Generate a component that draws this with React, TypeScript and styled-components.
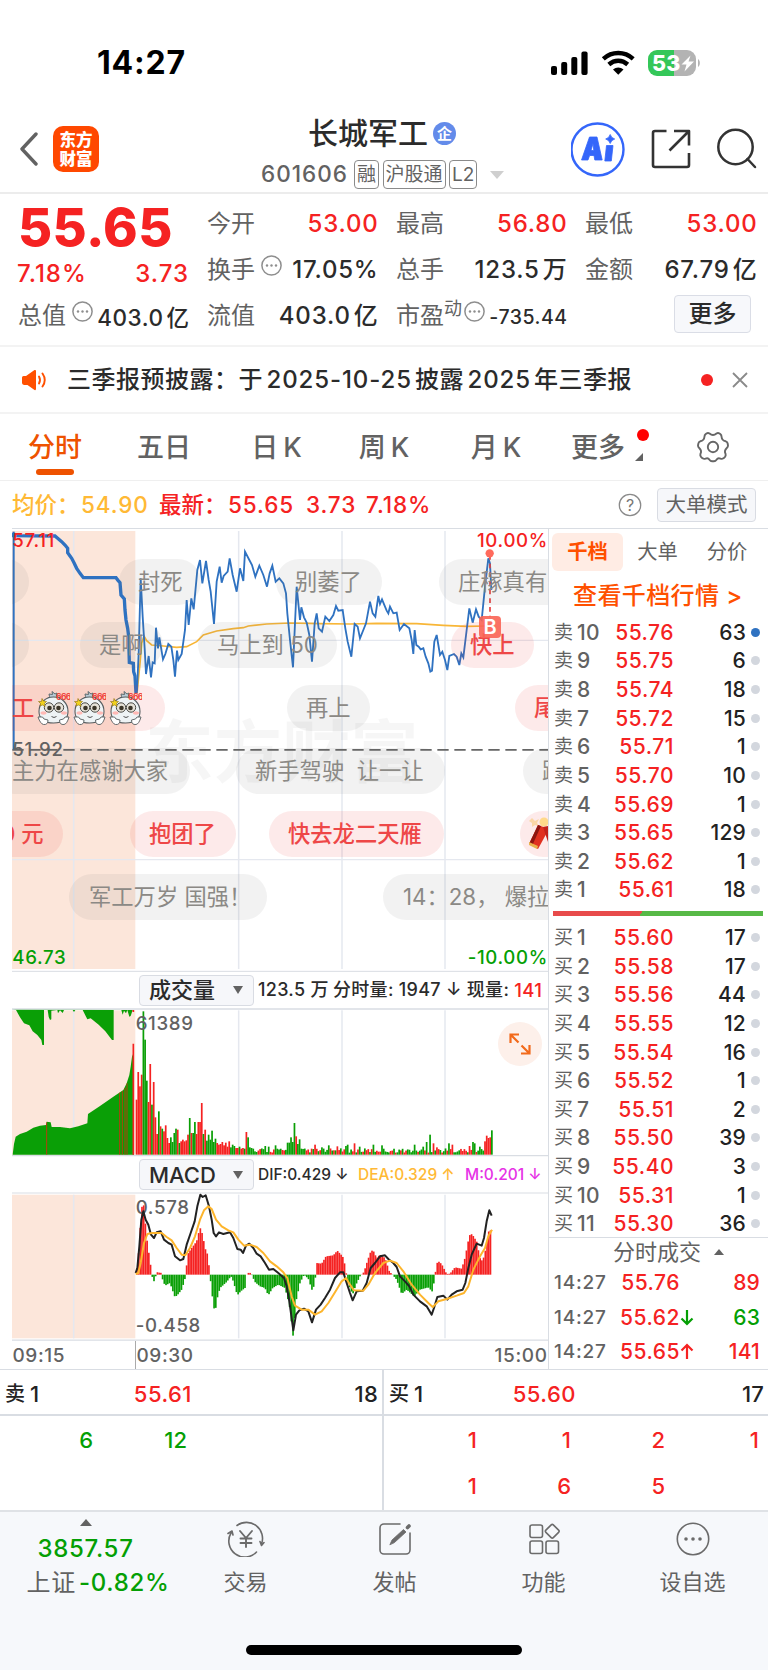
import React from "react";
import styled, { createGlobalStyle } from "styled-components";

const RED = "#f52222";
const GREEN = "#049f04";
const ORANGE = "#ff5000";
const AMBER = "#ffb935";
const INK = "#2b2b2b";
const GREY = "#626262";
const LINE = "#d9dde3";

const Global = createGlobalStyle`
  * { box-sizing: border-box; }
  body { margin: 0; background: #fff; }
  #root { width: 768px; }
`;

const Screen = styled.div`
  width: 768px;
  height: 1670px;
  display: flex;
  flex-direction: column;
  overflow: hidden;
  background: #fff;
  color: ${INK};
  font-family: Inter, "Noto Sans CJK SC", sans-serif;
  font-weight: 500;
  line-height: 1;
  white-space: pre;
`;

/* ---------- status bar ---------- */
const StatusBar = styled.header`
  height: 106px;
  padding: 19px 68px 0 97px;
  display: flex;
  align-items: center;
  justify-content: space-between;
`;
const Clock = styled.span`
  font-size: 32px;
  font-weight: 750;
  color: #000;
  letter-spacing: 0.8px;
`;

/* ---------- title bar ---------- */
const TitleBar = styled.div`
  height: 88px;
  flex: none;
  border-bottom: 2px solid #ececec;
  display: grid;
  grid-template-columns: 262px 1fr 197px;
`;
const TitleLeft = styled.div`
  display: flex;
  align-items: center;
  gap: 15px;
  padding: 0 0 0 19px;
`;
const Logo = styled.div`
  width: 46px;
  height: 46px;
  border-radius: 10px;
  background: #ff4800;
  color: #fff;
  font-family: "Noto Sans CJK SC", sans-serif;
  font-weight: 900;
  font-size: 16.5px;
  line-height: 18.5px;
  text-align: center;
  padding-top: 4px;
`;
const TitleMid = styled.div`
  display: flex;
  flex-direction: column;
`;
const NameRow = styled.div`
  display: flex;
  align-items: center;
  height: 30px;
  margin: 12px 0 0 46px;
  font-size: 30px;
  gap: 5px;
`;
const Verified = styled.span`
  width: 23px;
  height: 23px;
  border-radius: 50%;
  background: #638bea;
  color: #fff;
  font-size: 15px;
  font-weight: 700;
  display: grid;
  place-items: center;
`;
const CodeRow = styled.div`
  display: flex;
  align-items: center;
  height: 29px;
  margin-top: 12px;
  font-size: 22.5px;
  color: ${GREY};
`;
const Code = styled.span`
  width: 93px;
  margin-left: -1px;
  letter-spacing: 1px;
`;
const Tag = styled.span`
  height: 29px;
  margin-right: 3.5px;
  padding: 0 2px;
  border: 1.5px solid #8a8a8a;
  border-radius: 4px;
  font-size: 19px;
  font-weight: 400;
  display: flex;
  align-items: center;
`;
const TitleRight = styled.div`
  display: flex;
  align-items: center;
`;

/* ---------- quote ---------- */
const Quote = styled.section`
  height: 153px;
  flex: none;
  padding: 7px 12px 0 18px;
  border-bottom: 2px solid #f3f3f3;
  display: grid;
  grid-template-columns: 170px 170px 170px 171px;
  grid-template-rows: repeat(3, 46px);
  column-gap: 19px;
`;
const Headline = styled.div`
  grid-row: span 2;
  display: flex;
  flex-direction: column;
`;
const BigPrice = styled.div`
  font-size: 52.5px;
  font-weight: 800;
  color: ${RED};
  height: 53px;
  line-height: 53px;
  letter-spacing: 0.3px;
`;
const Change = styled.div`
  display: flex;
  justify-content: space-between;
  align-items: center;
  height: 52px;
  margin: 0 -1px;
  font-size: 24px;
  letter-spacing: 1px;
  color: ${RED};
`;
const Stat = styled.div`
  display: flex;
  align-items: center;
  justify-content: space-between;
`;
const StatLabel = styled.span`
  font-size: 24px;
  font-weight: 400;
  color: ${GREY};
  display: flex;
  align-items: center;
`;
const StatSup = styled.sup`
  font-size: 18px;
  line-height: 18px;
  margin: -14px 0 0 0;
`;
const StatValue = styled.span<{ $up?: boolean; $size?: number }>`
  font-size: ${(p) => p.$size ?? 24}px;
  color: ${(p) => (p.$up ? RED : INK)};
  padding-top: ${(p) => (p.$size ? 4 : 0)}px;
  letter-spacing: ${(p) => (p.$size ? 0.5 : 0.8)}px;
  margin-right: -1.5px;
`;
const Unit = styled.span`
  margin-left: 3px;
`;
const MoreButton = styled.button`
  all: unset;
  box-sizing: border-box;
  justify-self: end;
  align-self: start;
  width: 77px;
  height: 38px;
  margin: 2px 5px 0 0;
  border: 1.5px solid #dadde6;
  border-radius: 4px;
  background: #f7f8fb;
  font-size: 24px;
  display: grid;
  place-items: center;
`;

/* ---------- notice ---------- */
const Notice = styled.section`
  height: 67px;
  flex: none;
  border-bottom: 2px solid #f3f3f3;
  padding: 0 20px 0 21px;
  display: flex;
  align-items: center;
`;
const NoticeText = styled.p`
  margin: 0 0 0 19px;
  flex: 1;
  font-size: 24px;
  letter-spacing: 0.5px;
`;
const Latin = styled.span`
  margin: 0 3px 0 3.5px;
  letter-spacing: 0.9px;
`;
const Dot = styled.i<{ $size: number; $color: string }>`
  display: block;
  width: ${(p) => p.$size}px;
  height: ${(p) => p.$size}px;
  border-radius: 50%;
  background: ${(p) => p.$color};
`;

/* ---------- period tabs ---------- */
const Tabs = styled.nav`
  height: 67px;
  flex: none;
  border-bottom: 1.5px solid #efefef;
  display: grid;
  grid-template-columns: 110px 108px 117px 98px 126px 78px 151px;
`;
const Tab = styled.div<{ $active?: boolean }>`
  position: relative;
  display: flex;
  align-items: center;
  justify-content: center;
  font-size: 27px;
  color: ${(p) => (p.$active ? "#ee5200" : GREY)};
  &::after {
    content: "";
    display: ${(p) => (p.$active ? "block" : "none")};
    position: absolute;
    bottom: 5px;
    width: 38px;
    height: 6px;
    border-radius: 3px;
    background: #ee5200;
  }
`;
const TabK = styled.span`
  margin-left: 5px;
`;
const TabBadge = styled.span`
  position: absolute;
  right: -12px;
  top: 15px;
`;
const TabCorner = styled.i`
  position: absolute;
  right: -6px;
  top: 39px;
  border-left: 8px solid transparent;
  border-bottom: 8px solid ${GREY};
`;

/* ---------- price line ---------- */
const InfoLine = styled.div`
  height: 48px;
  flex: none;
  margin: 0 12px -1px;
  display: flex;
  align-items: center;
  font-size: 22.5px;
  color: ${RED};
`;
const InfoItem = styled.span<{ $w: number; $color?: string }>`
  width: ${(p) => p.$w}px;
  color: ${(p) => p.$color ?? RED};
  letter-spacing: ${(p) => (p.$w === 69 ? 0 : 0.9)}px;
`;
const ModeButton = styled.button`
  all: unset;
  box-sizing: border-box;
  width: 99px;
  height: 34px;
  margin-left: 15px;
  border: 1.5px solid #d9dce3;
  border-radius: 4px;
  background: #f6f7fa;
  color: ${GREY};
  font-size: 20.5px;
  font-weight: 400;
  display: grid;
  place-items: center;
`;

/* ---------- main area ---------- */
const Main = styled.main`
  height: 841px;
  flex: none;
  margin-left: 12px;
  display: grid;
  grid-template-columns: 537px 219px;
`;
const Charts = styled.div`
  border-right: 1px solid ${LINE};
  display: flex;
  flex-direction: column;
`;
const PriceArea = styled.div`
  position: relative;
  height: 444px;
  overflow: hidden;
  svg { display: block; }
`;
const Pill = styled.span<{ $x: number; $row: number; $w: number; $red?: boolean; $inset?: number }>`
  position: absolute;
  left: ${(p) => p.$x}px;
  top: ${(p) => 31.3 + p.$row * 63}px;
  width: ${(p) => p.$w}px;
  height: 45.5px;
  padding-left: ${(p) => p.$inset ?? 19}px;
  border-radius: 23px;
  background: ${(p) => (p.$red ? "rgba(235,50,50,.1)" : "rgba(110,110,110,.085)")};
  color: ${(p) => (p.$red ? "#ee4747" : "#8b8985")};
  font-size: 22.3px;
  font-weight: ${(p) => (p.$red ? 500 : 400)};
  display: flex;
  align-items: center;
  svg { flex: none; margin-left: 3px; }
`;
const PaneHead = styled.div<{ $h: number }>`
  height: ${(p) => p.$h}px;
  display: flex;
  align-items: center;
  padding-left: 127px;
`;
const Picker = styled.div`
  width: 115px;
  height: 31px;
  margin-right: 4px;
  flex: none;
  border: 1.5px solid #d9dce3;
  border-radius: 4px;
  background: #f6f7fa;
  padding: 0 10px 0 9px;
  display: flex;
  align-items: center;
  justify-content: space-between;
  font-size: 22px;
`;
const Caret = styled.i<{ $up?: boolean; $w: number; $h: number; $color?: string; $gap?: number }>`
  margin-left: ${(p) => p.$gap ?? 0}px;
  border: ${(p) => p.$w / 2}px solid transparent;
  border-top: ${(p) => (p.$up ? "0" : `${p.$h}px solid ${p.$color ?? GREY}`)};
  border-bottom: ${(p) => (p.$up ? `${p.$h}px solid ${p.$color ?? GREY}` : "0")};
`;
const Reading = styled.span<{ $w?: number; $color?: string; $size: number }>`
  font-size: ${(p) => p.$size}px;
  color: ${(p) => p.$color ?? INK};
  width: ${(p) => (p.$w ? `${p.$w}px` : "auto")};
  letter-spacing: ${(p) => (p.$size > 17 ? 0.3 : 0)}px;
  font-weight: ${(p) => (p.$size > 17 ? 500 : 550)};
`;
const PaneBox = styled.div`
  position: relative;
  svg { display: block; }
`;
const ExpandButton = styled.div`
  position: absolute;
  right: 6px;
  top: 14px;
  width: 44px;
  height: 44px;
  border-radius: 50%;
  background: #fdf0ea;
  display: grid;
  place-items: center;
`;
const TimeAxis = styled.div`
  height: 29px;
  flex: none;
  display: grid;
  grid-template-columns: 123px 1fr auto;
  align-items: stretch;
  color: ${GREY};
  font-size: 19px;
  letter-spacing: 0.6px;
`;
const TimeMark = styled.span<{ $rule?: boolean }>`
  display: flex;
  align-items: center;
  padding: 0 0.5px;
  border-left: ${(p) => (p.$rule ? "1px solid #aaa" : "0")};
`;

/* ---------- order book ---------- */
const Book = styled.aside`
  border-top: 1px solid ${LINE};
  display: flex;
  flex-direction: column;
`;
const BookTabs = styled.div`
  height: 47px;
  flex: none;
  padding: 4px 6px 5px 3px;
  display: grid;
  grid-template-columns: 71px 69px 1fr;
`;
const BookTab = styled.div<{ $active?: boolean }>`
  display: grid;
  place-items: center;
  border-radius: 6px;
  font-size: 20.3px;
  font-weight: ${(p) => (p.$active ? 700 : 400)};
  color: ${(p) => (p.$active ? ORANGE : GREY)};
  background: ${(p) => (p.$active ? "#ffece4" : "transparent")};
`;
const BookLink = styled.div`
  height: 42px;
  flex: none;
  padding: 0 0 2px 24px;
  display: flex;
  align-items: center;
  font-size: 24px;
  letter-spacing: 0.4px;
  color: ${ORANGE};
`;
const Level = styled.div`
  height: 28.64px;
  flex: none;
  display: grid;
  grid-template-columns: 23px 30px 67px 72px 1fr;
  align-items: center;
  padding-left: 5px;
  font-size: 21px;
  i { margin-left: 5px; }
`;
const LevelSide = styled.span`
  font-size: 19px;
  font-weight: 400;
  color: ${GREY};
`;
const LevelNo = styled.span`
  color: ${GREY};
  letter-spacing: 0.4px;
`;
const Price = styled.span`
  color: ${RED};
  text-align: right;
  font-weight: 550;
  letter-spacing: 0.5px;
`;
const Volume = styled.span`
  text-align: right;
  color: #222;
  font-weight: 550;
  letter-spacing: 0.2px;
`;
const Ratio = styled.div`
  height: 5px;
  flex: none;
  margin: 7px 5px 7px 4px;
  background: linear-gradient(120deg, #e84b4b 42%, #57b947 42%);
`;
const TradesHead = styled.div`
  height: 29px;
  flex: none;
  margin-top: -1.5px;
  border-top: 1.5px solid ${LINE};
  background: #fff;
  display: flex;
  align-items: center;
  padding-left: 64px;
  gap: 13px;
  font-size: 22px;
  font-weight: 400;
  color: ${GREY};
`;
const Trade = styled.div<{ $down?: boolean }>`
  height: 34.3px;
  flex: none;
  display: grid;
  grid-template-columns: 66px 60px 19px 1fr;
  align-items: center;
  padding: 0 8px 0 5px;
  font-size: 21px;
  ${Volume} { color: ${(p) => (p.$down ? GREEN : RED)}; }
  svg { stroke: ${(p) => (p.$down ? GREEN : RED)}; }
`;
const TradeTime = styled.span`
  font-size: 19px;
  letter-spacing: 0.8px;
  color: ${GREY};
`;

/* ---------- best quotes ---------- */
const Queue = styled.section`
  height: 143px;
  flex: none;
  border-top: 1.5px solid ${LINE};
  border-bottom: 2px solid #dfe2e6;
  display: grid;
  grid-template-columns: 384px 384px;
`;
const QueueSide = styled.div<{ $first?: boolean; $tone: string }>`
  border-right: ${(p) => (p.$first ? `2px solid ${LINE}` : "0")};
  color: ${(p) => p.$tone};
`;
const QueueHead = styled.div`
  height: 46px;
  padding: 3px 4px 0 5px;
  border-bottom: 2px solid ${LINE};
  display: grid;
  grid-template-columns: 56px 131px 1fr;
  align-items: center;
  font-size: 22px;
  color: #222;
`;
const QueueLabel = styled.span`
  display: flex;
  align-items: center;
  gap: 5px;
  font-size: 20px;
  span { font-size: 22px; }
`;
const QueueCells = styled.div`
  display: grid;
  grid-template-columns: repeat(4, 94px);
  grid-auto-rows: 46.5px;
  align-items: center;
  text-align: right;
  padding-top: 0.5px;
  margin-left: -1px;
  font-size: 22px;
  font-weight: 550;
`;

/* ---------- bottom nav ---------- */
const BottomNav = styled.footer`
  flex: 1;
  background: #f6f8fb;
  display: grid;
  grid-template-columns: 171px repeat(4, 149px);
  grid-template-rows: 133px 1fr;
`;
const NavItem = styled.div`
  display: flex;
  flex-direction: column;
  align-items: center;
  padding-top: 9px;
  gap: 14px;
  font-size: 22px;
  font-weight: 400;
  color: ${GREY};
`;
const IndexBox = styled.div`
  display: flex;
  flex-direction: column;
  align-items: center;
  padding-top: 7px;
  color: ${GREEN};
  font-size: 24px;
  letter-spacing: 0.7px;
  gap: 10.5px;
`;
const IndexRow = styled.div`
  display: flex;
  align-items: center;
  gap: 3px;
  padding-left: 25px;
`;
const IndexName = styled.span`
  color: ${GREY};
  font-weight: 400;
`;
const HomeBar = styled.div`
  grid-column: 1 / -1;
  justify-self: center;
  width: 276px;
  height: 10px;
  border-radius: 5px;
  background: #000;
`;

/* ---------- icons ---------- */
const stroke = { fill: "none", strokeLinecap: "round", strokeLinejoin: "round" } as const;

const InfoGlyph = styled.svg<{ $tight?: boolean }>`
  margin: -10px 0 0 ${(p) => (p.$tight ? 2 : 6)}px;
`;
const Ellipsis = ({ tight }: { tight?: boolean }) => (
  <InfoGlyph $tight={tight} width="21" height="21" viewBox="0 0 21 21">
    <circle cx="10.5" cy="10.5" r="9.6" fill="none" stroke="#8e8e8e" strokeWidth="1.5" />
    <g fill="#8e8e8e"><circle cx="6" cy="10.5" r="1.2" /><circle cx="10.5" cy="10.5" r="1.2" /><circle cx="15" cy="10.5" r="1.2" /></g>
  </InfoGlyph>
);

const StatusIcons = () => (
  <svg width="152" height="28" viewBox="0 0 152 28">
    <rect x="3" y="17" width="6" height="9" rx="2" />
    <rect x="13.2" y="13" width="6" height="13" rx="2" />
    <rect x="23.3" y="8" width="6" height="18" rx="2" />
    <rect x="33.4" y="2.5" width="6.2" height="23.5" rx="2" />
    <g fill="none" stroke="#000" strokeWidth="4.4">
      <path d="M55.3 9.8C64 2 76.5 2 85.2 9.8" />
      <path d="M60.8 15.5C66.5 10.5 74 10.5 79.7 15.5" />
    </g>
    <path d="M65 20.5C68 17.7 72.5 17.7 75.5 20.5L70.25 25.8Z" />
    <path d="M126 1V27H109A9 9 0 0 1 100 18V10A9 9 0 0 1 109 1Z" fill="#34c759" />
    <path d="M126 1H139A9 9 0 0 1 148 10V18A9 9 0 0 1 139 27H126Z" fill="#b3b3b3" />
    <path d="M150 10C152.5 11.5 152.5 16.500 150 18Z" fill="#b3b3b3" />
    <text x="104" y="21.600" fontSize="21.500" fontWeight="800" fill="#fff" letterSpacing="0.300">53</text>
    <path d="M142.500 6.500L133.500 15.500H138.500L136.500 22.500L146 12.500H140.500Z" fill="#fff" />
  </svg>
);

const BackIcon = () => (
  <svg width="19" height="34" viewBox="0 0 19 34" {...stroke} stroke="#626262" strokeWidth="3.4">
    <path d="M17 2L3 17L17 32" />
  </svg>
);

const AiIcon = () => (
  <svg width="55" height="55" viewBox="0 0 55 55">
    <circle cx="26.500" cy="27.500" r="26" fill="none" stroke="#3466fa" strokeWidth="2.400" />
    <path d="M18.500 15H26L31.200 38H23.800L23 33.500H18.600L17 38H10.500ZM22 21.500L20 28.500H22.800Z" fill="#3466fa" fillRule="evenodd" stroke="#3466fa" strokeWidth="0.800" strokeLinejoin="round" />
    <path d="M35.500 23.500H42L40.300 39H33.800Z" fill="#3466fa" stroke="#3466fa" strokeWidth="0.800" strokeLinejoin="round" />
    <path d="M39.200 12.500Q40.200 16 43.700 17Q40.200 18 39.200 21.500Q38.200 18 34.700 17Q38.200 16 39.200 12.500Z" fill="#3466fa" stroke="#3466fa" strokeWidth="0.800" />
  </svg>
);

const HeaderGlyph = styled.svg`
  margin-left: 25px;
`;
const ShareIcon = () => (
  <HeaderGlyph width="40" height="40" viewBox="0 0 40 40" {...stroke} stroke="#333" strokeWidth="2.600" strokeLinecap="butt">
    <path d="M15.500 2H4A2 2 0 0 0 2 4V36A2 2 0 0 0 4 38H36A2 2 0 0 0 38 36V24" />
    <path d="M23 2H38V16.500M38 2L18.500 21.500" />
  </HeaderGlyph>
);
const SearchIcon = () => (
  <HeaderGlyph width="42" height="42" viewBox="0 0 42 42" {...stroke} stroke="#333" strokeWidth="2.500">
    <circle cx="19.500" cy="19" r="17.200" />
    <path d="M31.500 31L39 39" />
  </HeaderGlyph>
);

const SpeakerIcon = () => (
  <svg width="27" height="22" viewBox="0 0 27 22">
    <path d="M1 8.500Q1 7 2.500 7H5L13.500 1Q15 .5 15 2V20Q15 21.500 13.500 21L6.500 16H3Q1 15.500 1 14Z" fill="#ff5000" />
    <g {...stroke} stroke="#ff5000" strokeWidth="1.900"><path d="M18 7.500Q20 11 18 14.500" /><path d="M21.500 4.500Q26 11 21.500 17.500" /></g>
  </svg>
);
const CloseGlyph = styled.svg`
  margin-left: 19px;
`;

const GearIcon = () => (
  <svg width="32" height="32" viewBox="0 0 32 32" {...stroke} stroke="#666" strokeWidth="1.900">
    <circle cx="16" cy="16" r="5.200" />
    <path d="M9.500 2.500Q11 1.500 12.500 2.500Q16 5.500 19.500 2.500Q21 1.500 22.500 2.500L23.500 3.200Q24.500 4 24.500 5.500Q24.800 9.500 28.800 10.300Q30.300 10.800 30.600 12.300L31 14.500Q31 16 29.800 17Q26.800 19.800 28.600 23Q29 24.500 28 25.800L26.500 27.300Q25 28.200 23.500 27.600Q21 26.300 19.500 28.800Q18.500 30.300 17 30.300H15Q13.500 30.300 12.500 28.800Q11 26.300 8.500 27.600Q7 28.200 5.500 27.300L4 25.800Q3 24.500 3.400 23Q5.200 19.800 2.200 17Q1 16 1 14.500L1.400 12.300Q1.700 10.800 3.200 10.300Q7.200 9.500 7.500 5.500Q7.500 4 8.500 3.200Z" />
  </svg>
);

const HelpGlyph = styled.svg`
  margin-left: auto;
`;
const HelpIcon = () => (
  <HelpGlyph width="24" height="24" viewBox="0 0 24 24">
    <circle cx="12" cy="12" r="10.700" fill="none" stroke="#8a8a8a" strokeWidth="1.300" />
    <text x="12" y="17.500" textAnchor="middle" fontSize="16" fontWeight="400" fill="#777">?</text>
  </HelpGlyph>
);

const ArrowIcon = ({ up }: { up?: boolean }) => (
  <svg width="14" height="17" viewBox="0 0 14 17" fill="none" strokeWidth="2.200">
    <path d={up ? "M7 16V2M1.500 7.500L7 2L12.500 7.500" : "M7 1V15M1.500 9.500L7 15L12.500 9.500"} />
  </svg>
);

const FaceEmoji = () => (
  <svg width="33" height="36" viewBox="0 0 33 36">
    <path d="M10 9Q14 6.500 12 4L15.500 4.500L15 1.500L18 4L20 3L19.500 6L23 8Z" fill="#b9ccd6" stroke="#5f6b70" strokeWidth="1" strokeLinejoin="round" />
    <path d="M16.500 7C25 7 31 13.500 31 21.500C31 29.500 25 33 16.500 33S2 29.500 2 21.500C2 13.500 8 7 16.500 7Z" fill="#eef3f5" stroke="#565d60" strokeWidth="1.100" />
    <circle cx="12" cy="17.500" r="4.700" fill="#e6e2d8" stroke="#4a4a45" strokeWidth="1" />
    <circle cx="22" cy="17.500" r="4.700" fill="#e6e2d8" stroke="#4a4a45" strokeWidth="1" />
    <circle cx="12.500" cy="18" r="2.300" fill="#3b3528" /><circle cx="21.500" cy="18" r="2.300" fill="#3b3528" />
    <ellipse cx="6.500" cy="23" rx="3" ry="1.700" fill="#ffb9b5" /><ellipse cx="27" cy="23" rx="3" ry="1.700" fill="#ffb9b5" />
    <path d="M14.500 26.500Q17 28.500 19.500 26.500" fill="none" stroke="#555" strokeWidth="1" />
    <path d="M1 27L5.500 27L7 29L11 30Q11 35 6.500 34.500Q3.500 34 1 27ZM32 27L28 27L26.500 29L22.500 30Q22.500 35 27 34.500Q30 34 32 27Z" fill="#fff" stroke="#565d60" strokeWidth="0.900" />
    <path d="M5 8.500L6.500 11L9.500 11.500L7.500 13.500L8 16.500L5.500 15L3 16L3.500 13.500L1.500 11.500L4.500 11.500Z" fill="#f2d21e" stroke="#8a6d10" strokeWidth="0.600" />
    <text x="19" y="9.500" fontSize="8.500" fontWeight="700" fill="#f0443c" letterSpacing="-0.600">666</text>
  </svg>
);

const Firecracker = () => (
  <svg width="34" height="34" viewBox="0 0 34 34">
    <path d="M3 1L6 4L10 2L8 6L10 9L6 8L3 10V6L0 4Z" fill="#f8cf8a" opacity=".7" /><circle cx="15" cy="5" r="4.500" fill="#ffd98a" />
    <path d="M9 8L20 12L9 32L0 27Z" fill="#e0301f" /><path d="M9 8L12 9L3 29L0 27Z" fill="#8d150f" />
    <path d="M0 25L9 29L8 32L0 28Z" fill="#e9b24b" /><path d="M14 10L25 8L31 33L22 34Z" fill="#c3211a" />
  </svg>
);

const TradeIcon = () => (
  <svg width="38" height="36" viewBox="0 0 38 36" {...stroke} stroke="#6b6b6b" strokeWidth="1.600">
    <path d="M10 4.500A16 16 0 0 1 34.500 23M34.500 24.500L37 21.500M34.500 24.500L33 20.500M29.500 31A16 16 0 0 1 4 12M1 12.500L5 10L6 14" />
    <path d="M13 10L19 17L25 10M19 17V26M13.500 17.500H24.500M13.500 22H24.500" strokeWidth="1.900" />
  </svg>
);
const PostIcon = () => (
  <svg width="34" height="36" viewBox="0 0 34 36" {...stroke} stroke="#6b6b6b" strokeWidth="1.600">
    <path d="M22 3H6A4 4 0 0 0 2 7V29A4 4 0 0 0 6 33H28A4 4 0 0 0 32 29V12" />
    <path d="M12 23.500L14 19L25.500 8.500L28 11L16.500 21.500Z" fill="#6b6b6b" strokeWidth="0.800" /><path d="M29.500 6.500L31 5" strokeWidth="3.600" />
  </svg>
);
const GridIcon = () => (
  <svg width="34" height="36" viewBox="0 0 34 36" {...stroke} stroke="#6b6b6b" strokeWidth="1.600">
    <rect x="3" y="4" width="12.500" height="12.500" rx="2" /><rect x="3" y="20" width="12.500" height="12.500" rx="2" />
    <rect x="19" y="20" width="12.500" height="12.500" rx="2" /><rect x="20" y="5" width="10.500" height="10.500" rx="1.500" transform="rotate(45 25.250 10.250)" />
  </svg>
);
const MoreIcon = () => (
  <svg width="34" height="36" viewBox="0 0 34 36">
    <circle cx="17" cy="18" r="15.700" fill="none" stroke="#6b6b6b" strokeWidth="1.600" />
    <g fill="#6b6b6b"><circle cx="10" cy="18" r="1.800" /><circle cx="17" cy="18" r="1.800" /><circle cx="24" cy="18" r="1.800" /></g>
  </svg>
);

/* ---------- chart data (three units to the pixel) ---------- */
const AUCTION = "41,398 41,407 165,408 172,414 185,425 195,435 203,445 203,458 215,475 222,488 230,505 240,520 250,533 348,533 354,541 360,548 363,585 373,597 375,630 378,660 383,685 386,710 388,787 400,790 401,815 405,828 408,880";
const PRICE = "408,880 411,870 416,760 422,535 428,650 434,745 438,822 446,768 453,832 458,787 464,790 468,683 474,745 478,712 489,778 496,762 505,732 514,740 520,780 525,830 531,752 535,780 545,762 555,690 560,600 566,675 574,595 581,628 592,510 600,480 607,550 618,483 626,540 632,575 642,672 650,545 659,500 665,548 671,528 683,515 689,475 698,525 710,575 720,505 730,543 735,455 748,480 756,495 766,530 778,497 790,525 801,560 809,520 817,497 827,545 838,535 850,550 858,580 862,640 870,720 879,802 890,560 900,660 904,622 912,652 920,668 928,705 936,785 944,670 950,640 956,685 966,695 976,650 988,663 1000,645 1008,618 1015,632 1028,630 1036,685 1043,725 1054,770 1064,672 1073,680 1080,715 1090,690 1098,670 1110,605 1118,640 1126,650 1135,588 1140,612 1146,598 1160,632 1165,640 1170,620 1180,640 1190,638 1199,690 1212,672 1228,685 1235,720 1240,762 1244,690 1249,735 1256,740 1262,748 1270,745 1277,770 1285,790 1291,815 1296,812 1303,725 1310,705 1320,765 1327,755 1335,780 1342,810 1348,768 1362,762 1370,770 1378,795 1384,760 1390,772 1400,690 1408,625 1418,668 1428,628 1436,650 1445,660 1455,560 1465,475 1470,490 1474,570";
const AVERAGE = "411,880 420,790 425,730 432,708 440,722 455,735 490,738 530,742 560,740 590,725 610,705 650,693 700,686 730,683 745,678 800,672 870,669 960,671 1050,672 1130,670 1250,671 1330,676 1400,679 1460,678";
const DIF = "407,850 412,835 418,770 424,690 430,665 437,690 445,705 453,735 462,745 470,728 482,725 492,750 505,760 515,765 525,800 540,812 550,808 560,765 572,730 584,695 592,650 601,615 608,622 617,617 627,650 635,690 641,730 648,740 657,728 670,733 690,728 700,745 712,778 722,780 729,790 738,768 748,762 760,775 770,792 782,800 795,820 807,840 820,838 835,850 852,865 860,890 868,935 880,1022 888,975 898,962 912,957 925,965 936,998 948,960 962,945 975,925 990,900 1005,865 1020,848 1030,848 1040,880 1050,910 1058,932 1070,905 1088,903 1100,880 1112,835 1125,820 1140,800 1155,797 1165,808 1180,820 1190,832 1200,860 1215,875 1228,890 1240,915 1260,935 1280,950 1295,975 1302,955 1312,922 1330,918 1342,930 1355,915 1370,905 1388,900 1396,880 1405,835 1415,795 1430,762 1445,768 1452,745 1460,695 1468,662 1475,678";
const DEA = "407,853 415,850 422,820 432,760 442,733 455,730 485,730 500,742 515,752 530,775 545,795 556,797 570,775 585,740 600,690 612,662 625,650 635,658 648,690 665,710 685,722 700,728 715,750 732,768 750,765 770,772 790,790 810,815 830,830 850,848 862,865 875,920 885,948 905,960 925,960 945,975 965,965 985,940 1005,908 1025,875 1038,865 1050,885 1062,902 1090,903 1105,885 1125,850 1150,820 1170,813 1190,820 1210,845 1235,885 1260,915 1285,940 1298,952 1315,935 1340,928 1370,918 1392,910 1405,890 1420,840 1440,800 1455,775 1465,740 1476,720";

// Opening minutes: positive bars are red, negative ones green.
const OPEN_VOLUME = [
  165, 248, 205, 240, -430, -345, -222, 158, 272, -150, 218, 112, 62, -130, 85, -78, 70, 88, 50, 35, -52, -38, -65, -78, 75, -35,
  40, 45, 40, 43, 60, -110, 65, -65, -98, 62, 98, 98, 155, -62, 75, -42, -60, -45, -72, -38, -48, 35, 30, 32, 38, 28, 36, 24, 40,
  -22, -30, -26, 20, 20, -24, 18, 20, -18, 68, -52, -22, -20, -18, -10, -8,
];
const VOLUME_PEAKS: Record<number, number> = {
  75: -26, 77: -24, 81: -28, 88: -36, 89: -36, 90: -52, 91: -38, 92: -95, 93: 55, 94: -32, 95: -46, 96: -18, 104: 30, 108: -22, 112: -28, 117: 25,
  122: -26, 123: -30, 127: 34, 130: -24, 138: -30, 143: -28, 162: -30, 167: -24, 169: -38, 171: -60, 173: 34, 175: 22, 182: -34, 184: 30,
  194: 26, 196: -38, 197: -34, 200: -24, 203: 40, 204: 57, 205: 50, 206: 52, 207: -73, 208: -14,
};
const volumeBars = Array.from({ length: 208 }, (_, i) => {
  if (i < OPEN_VOLUME.length) return OPEN_VOLUME[i];
  if (VOLUME_PEAKS[i]) return VOLUME_PEAKS[i];
  const n = Math.abs(Math.sin(i * 12.9898) * 43758.5453) % 1;
  const h = 6 + n * 13;
  return Math.sin(i * 0.9) + Math.sin(i * 2.3) > 0.1 ? h : -h;
});

const HIST: [number, number][] = [
  [407, 5], [412, 25], [418, 90], [423, 180], [429, 228], [434, 180], [439, 120], [445, 75], [450, 45], [455, 0], [460, -18], [465, -22],
  [469, 10], [475, 5], [482, 8], [487, -12], [495, -33], [510, -25], [525, -68], [535, -58], [545, -45], [553, -20], [558, 0], [562, 60],
  [575, 80], [590, 100], [600, 142], [608, 120], [615, 80], [623, 60], [629, 10], [633, -30], [640, -90], [645, -115], [652, -70], [660, -40],
  [680, -22], [693, -5], [700, -20], [712, -62], [722, -50], [735, -40], [740, 0], [748, 8], [755, 0], [765, -22], [780, -35], [795, -40],
  [805, -62], [818, -40], [835, -30], [855, -40], [868, -90], [880, -190], [888, -80], [900, -25], [912, 0], [925, -12], [938, -52],
  [946, -10], [950, 35], [965, 33], [978, 55], [1000, 58], [1012, 72], [1028, 55], [1036, 25], [1042, -20], [1058, -60], [1068, -30],
  [1080, -5], [1092, 8], [1102, 40], [1113, 72], [1120, 72], [1130, 50], [1140, 60], [1155, 50], [1168, 10], [1180, -3], [1190, -15],
  [1205, -58], [1220, -45], [1243, -65], [1260, -45], [1285, -38], [1298, -52], [1305, 0], [1313, 42], [1325, 32], [1340, 2], [1350, 3],
  [1365, 22], [1385, 18], [1395, 50], [1408, 118], [1416, 122], [1430, 100], [1440, 50], [1448, 40], [1458, 80], [1465, 128], [1471, 135], [1480, 80],
];
const histAt = (x: number) => {
  const k = Math.max(1, HIST.findIndex(([hx]) => hx >= x));
  const [x0, h0] = HIST[k - 1];
  const [x1, h1] = HIST[k];
  return h0 + ((h1 - h0) * (x - x0)) / (x1 - x0);
};

const Grid = ({ top, bottom }: { top: number; bottom: number }) => (
  <g>
    <rect x="36" y={top} width="370" height={bottom - top} fill="#fce6da" />
    {[221, 716, 1026, 1335].map((x) => (
      <line key={x} x1={x} x2={x} y1={top} y2={bottom} stroke="#e5e8ef" strokeWidth="4.5" />
    ))}
  </g>
);
const Label = styled.text<{ $fill?: string }>`
  font-size: 56px;
  letter-spacing: 2px;
  fill: ${(p) => p.$fill ?? GREY};
`;

const PriceChart = () => (
  <svg width="536" height="444" viewBox="36 384 1608 1332">
    <Grid top={393} bottom={1707} />
    <path d="M36 385.500H1644M36 1714H1644" stroke="#d9dde3" strokeWidth="3" />
    <path d="M36 721H1644M36 1379H1644" stroke="#e5e8ef" strokeWidth="4" />
    <text x="436" y="1130" fontSize="205" fontWeight="700" fill="#000" fillOpacity=".035" fontFamily="Noto Sans CJK SC">东方财富</text>
    <path d="M36 1049.500H1644" stroke="#666" strokeWidth="5" strokeDasharray="34 17" strokeDashoffset="-1" />
    <polyline points={AVERAGE} fill="none" stroke="#f8b637" strokeWidth="5" />
    <path d="M41 395V1048" stroke="#2f72c1" strokeWidth="6" />
    <polyline points={AUCTION} fill="none" stroke="#2f72c1" strokeWidth="10" />
    <polyline points={PRICE} fill="none" stroke="#2f72c1" strokeWidth="5.500" />
    <path d="M1470 465V650" stroke="#e84040" strokeWidth="5" strokeDasharray="14 12" />
    <circle cx="1469" cy="460" r="12.500" fill="#ff6a5c" />
    <Label x="37" y="441" $fill={RED}>57.11</Label>
    <Label x="37" y="1069">51.92</Label>
    <Label x="37" y="1693" $fill={GREEN}>46.73</Label>
    <Label x="1644" y="441" textAnchor="end" $fill={RED}>10.00%</Label>
    <Label x="1644" y="1693" textAnchor="end" $fill={GREEN}>-10.00%</Label>
  </svg>
);

const BuyMark = styled.span`
  position: absolute;
  left: 467px;
  top: 88px;
  width: 22px;
  height: 22px;
  border-radius: 4px;
  background: rgba(250, 100, 85, 0.9);
  color: #fff;
  font-size: 20px;
  font-weight: 600;
  display: grid;
  place-items: center;
`;

const VolumeChart = () => (
  <svg width="536" height="149" viewBox="36 54 1608 447">
    <Grid top={61} bottom={494} />
    <path d="M36 57H1644M36 497H1644" stroke="#d9dde3" strokeWidth="4" />
    <polygon fill="#0a9f06" points="38,494 42,462 47,440 60,432 80,425 100,413 120,407 138,405 140,395 152,397 155,411 180,411 210,415 235,409 262,400 264,372 300,348 340,320 370,300 380,280 388,255 392,230 396,200 400,190 402,494" />
    <polygon fill="#0a9f06" points="36,59 48,60 60,82 72,100 88,106 98,124 112,135 124,150 127,165 132,165 132,60 143,60 146,80 150,90 154,88 154,62 172,60 174,70 180,61 188,69 192,60 218,60 222,66 226,60 248,60 262,88 272,85 296,104 316,124 336,150 341,150 341,60 364,60 368,74 372,62 378,70 382,60 388,80 392,78 398,60" />
    <path d="M140 397V494M359 308V494M367 303V494M375 294V494M381 280V494" stroke="#d52a10" strokeWidth="2.500" />
    <path d="M400 161V494M400 60V66" stroke="#f52222" strokeWidth="5" />
    {volumeBars.map((v, i) => (
      <rect key={i} x={407 + i * 5.15} y={494 - Math.abs(v)} width="5.15" height={Math.abs(v)} fill={v > 0 ? "#f52222" : "#0a9f06"} />
    ))}
    <Label x="407" y="119">61389</Label>
  </svg>
);

const MacdChart = () => (
  <svg width="536" height="149" viewBox="36 607 1608 447">
    <Grid top={615} bottom={1046} />
    <path d="M36 610H1644M36 1051.500H1644" stroke="#d9dde3" strokeWidth="3.500" />
    {Array.from({ length: 207 }, (_, i) => {
      const x = 408 + i * 5.15;
      const h = histAt(x + 2.5);
      return <rect key={i} x={x} y={h > 0 ? 855 - h : 855} width="5" height={Math.abs(h)} fill={h > 0 ? "#f52222" : "#0a9f06"} />;
    })}
    <Label x="407" y="672">0.578</Label>
    <Label x="407" y="1027">-0.458</Label>
    <polyline points={DIF} fill="none" stroke="#222" strokeWidth="6" strokeLinejoin="round" />
    <polyline points={DEA} fill="none" stroke="#fdb52c" strokeWidth="6" strokeLinejoin="round" />
  </svg>
);

const SELLS: [string, string, string][] = [
  ["10", "55.76", "63"], ["9", "55.75", "6"], ["8", "55.74", "18"], ["7", "55.72", "15"], ["6", "55.71", "1"],
  ["5", "55.70", "10"], ["4", "55.69", "1"], ["3", "55.65", "129"], ["2", "55.62", "1"], ["1", "55.61", "18"],
];
const BUYS: [string, string, string][] = [
  ["1", "55.60", "17"], ["2", "55.58", "17"], ["3", "55.56", "44"], ["4", "55.55", "12"], ["5", "55.54", "16"], ["6", "55.52", "1"],
  ["7", "55.51", "2"], ["8", "55.50", "39"], ["9", "55.40", "3"], ["10", "55.31", "1"], ["11", "55.30", "36"],
];
const Levels = ({ side, rows }: { side: string; rows: [string, string, string][] }) => (
  <>
    {rows.map(([no, price, vol]) => (
      <Level key={no}>
        <LevelSide>{side}</LevelSide>
        <LevelNo>{no}</LevelNo>
        <Price>{price}</Price>
        <Volume>{vol}</Volume>
        <Dot $size={9} $color={side === "卖" && no === "10" ? "#2f72c1" : "#d3d7de"} />
      </Level>
    ))}
  </>
);

export default function App() {
  return (
    <Screen>
      <Global />
      <StatusBar>
        <Clock>14:27</Clock>
        <StatusIcons />
      </StatusBar>

      <TitleBar>
        <TitleLeft>
          <BackIcon />
          <Logo>东方<br />财富</Logo>
        </TitleLeft>
        <TitleMid>
          <NameRow>长城军工<Verified>企</Verified></NameRow>
          <CodeRow>
            <Code>601606</Code>
            <Tag>融</Tag>
            <Tag>沪股通</Tag>
            <Tag>L2</Tag>
            <Caret $w={14} $h={8} $color="#cfcfcf" $gap={9} />
          </CodeRow>
        </TitleMid>
        <TitleRight>
          <AiIcon />
          <ShareIcon />
          <SearchIcon />
        </TitleRight>
      </TitleBar>

      <Quote>
        <Headline>
          <BigPrice>55.65</BigPrice>
          <Change><span>7.18%</span><span>3.73</span></Change>
        </Headline>
        <Stat><StatLabel>今开</StatLabel><StatValue $up>53.00</StatValue></Stat>
        <Stat><StatLabel>最高</StatLabel><StatValue $up>56.80</StatValue></Stat>
        <Stat><StatLabel>最低</StatLabel><StatValue $up>53.00</StatValue></Stat>
        <Stat><StatLabel>换手<Ellipsis /></StatLabel><StatValue>17.05%</StatValue></Stat>
        <Stat><StatLabel>总手</StatLabel><StatValue>123.5<Unit>万</Unit></StatValue></Stat>
        <Stat><StatLabel>金额</StatLabel><StatValue>67.79<Unit>亿</Unit></StatValue></Stat>
        <Stat><StatLabel>总值<Ellipsis /></StatLabel><StatValue $size={22.5}>403.0<Unit>亿</Unit></StatValue></Stat>
        <Stat><StatLabel>流值</StatLabel><StatValue>403.0<Unit>亿</Unit></StatValue></Stat>
        <Stat><StatLabel>市盈<StatSup>动</StatSup><Ellipsis tight /></StatLabel><StatValue $size={19.5}>-735.44</StatValue></Stat>
        <MoreButton>更多</MoreButton>
      </Quote>

      <Notice>
        <SpeakerIcon />
        <NoticeText>三季报预披露：于<Latin>2025-10-25</Latin>披露<Latin>2025</Latin>年三季报</NoticeText>
        <Dot $size={12} $color={RED} />
        <CloseGlyph width="16" height="16" viewBox="0 0 16 16" stroke="#8a8a8a" strokeWidth="1.8">
          <path d="M1 1L15 15M15 1L1 15" />
        </CloseGlyph>
      </Notice>

      <Tabs>
        <Tab $active>分时</Tab>
        <Tab>五日</Tab>
        <Tab>日<TabK>K</TabK></Tab>
        <Tab>周<TabK>K</TabK></Tab>
        <Tab>月<TabK>K</TabK></Tab>
        <Tab>更多<TabBadge><Dot $size={12} $color="#ff0000" /></TabBadge><TabCorner /></Tab>
        <Tab><GearIcon /></Tab>
      </Tabs>

      <InfoLine>
        <InfoItem $w={69} $color={AMBER}>均价：</InfoItem>
        <InfoItem $w={78} $color={AMBER}>54.90</InfoItem>
        <InfoItem $w={69}>最新：</InfoItem>
        <InfoItem $w={78}>55.65</InfoItem>
        <InfoItem $w={60}>3.73</InfoItem>
        <InfoItem $w={70}>7.18%</InfoItem>
        <HelpIcon />
        <ModeButton>大单模式</ModeButton>
      </InfoLine>

      <Main>
        <Charts>
          <PriceArea>
            <PriceChart />
            <Pill $row={0} $x={-60} $w={77} />
            <Pill $row={0} $x={107} $w={82}>封死</Pill>
            <Pill $row={0} $x={264} $w={106}>别萎了</Pill>
            <Pill $row={0} $x={427} $w={150}>庄稼真有</Pill>
            <Pill $row={1} $x={-60} $w={77} />
            <Pill $row={1} $x={68} $w={83}>是啊</Pill>
            <Pill $row={1} $x={186} $w={139}>马上到 50</Pill>
            <Pill $row={1} $x={439} $w={83} $red>快上</Pill>
            <Pill $row={2} $x={-19} $w={172} $red>工<FaceEmoji /><FaceEmoji /><FaceEmoji /></Pill>
            <Pill $row={2} $x={275} $w={83}>再上</Pill>
            <Pill $row={2} $x={503} $w={83} $red>尾</Pill>
            <Pill $row={3} $x={-19} $w={197}>主力在感谢大家</Pill>
            <Pill $row={3} $x={224} $w={209}>新手驾驶  让一让</Pill>
            <Pill $row={3} $x={511} $w={83}>跌</Pill>
            <Pill $row={4} $x={-30} $w={81} $red>0 元</Pill>
            <Pill $row={4} $x={118} $w={106} $red>抱团了</Pill>
            <Pill $row={4} $x={257} $w={175} $red>快去龙二天雁</Pill>
            <Pill $row={4} $x={508} $w={83} $red $inset={6}><Firecracker /></Pill>
            <Pill $row={5} $x={57} $w={198} $inset={20}>军工万岁 国强！</Pill>
            <Pill $row={5} $x={371} $w={220} $inset={20}>14：28， 爆拉</Pill>
            <BuyMark>B</BuyMark>
          </PriceArea>
          <PaneHead $h={36}>
            <Picker>成交量<Caret $w={10} $h={8} /></Picker>
            <Reading $size={18} $w={75}>123.5 万</Reading>
            <Reading $size={18}>分时量: 1947 ↓ 现量: </Reading>
            <Reading $size={18.5} $color={RED}>141</Reading>
          </PaneHead>
          <PaneBox>
            <VolumeChart />
            <ExpandButton>
              <svg width="22" height="22" viewBox="0 0 22 22" fill="none" stroke="#f26a1b" strokeWidth="2.2">
                <path d="M10 1.500H1.500V10M2 2L9.500 9.500M12 20.500H20.500V12M20 20L12.500 12.500" />
              </svg>
            </ExpandButton>
          </PaneBox>
          <PaneHead $h={35}>
            <Picker>MACD<Caret $w={10} $h={8} /></Picker>
            <Reading $size={15.5} $w={100}>DIF:0.429 ↓</Reading>
            <Reading $size={15.5} $w={107} $color={AMBER}>DEA:0.329 ↑</Reading>
            <Reading $size={15.5} $color="#e632e6">M:0.201 ↓</Reading>
          </PaneHead>
          <PaneBox><MacdChart /></PaneBox>
          <TimeAxis>
            <TimeMark>09:15</TimeMark>
            <TimeMark $rule>09:30</TimeMark>
            <TimeMark>15:00</TimeMark>
          </TimeAxis>
        </Charts>

        <Book>
          <BookTabs>
            <BookTab $active>千档</BookTab>
            <BookTab>大单</BookTab>
            <BookTab>分价</BookTab>
          </BookTabs>
          <BookLink>查看千档行情 &gt;</BookLink>
          <Levels side="卖" rows={SELLS} />
          <Ratio />
          <Levels side="买" rows={BUYS} />
          <TradesHead>分时成交<Caret $up $w={10} $h={6} /></TradesHead>
          <Trade><TradeTime>14:27</TradeTime><Price>55.76</Price><span /><Volume>89</Volume></Trade>
          <Trade $down><TradeTime>14:27</TradeTime><Price>55.62</Price><ArrowIcon /><Volume>63</Volume></Trade>
          <Trade><TradeTime>14:27</TradeTime><Price>55.65</Price><ArrowIcon up /><Volume>141</Volume></Trade>
        </Book>
      </Main>

      <Queue>
        <QueueSide $first $tone={GREEN}>
          <QueueHead><QueueLabel>卖<span>1</span></QueueLabel><Price>55.61</Price><Volume>18</Volume></QueueHead>
          <QueueCells><span>6</span><span>12</span></QueueCells>
        </QueueSide>
        <QueueSide $tone={RED}>
          <QueueHead><QueueLabel>买<span>1</span></QueueLabel><Price>55.60</Price><Volume>17</Volume></QueueHead>
          <QueueCells><span>1</span><span>1</span><span>2</span><span>1</span><span>1</span><span>6</span><span>5</span></QueueCells>
        </QueueSide>
      </Queue>

      <BottomNav>
        <IndexBox>
          <Caret $up $w={13} $h={7} />
          <span>3857.57</span>
          <IndexRow><IndexName>上证</IndexName>-0.82%</IndexRow>
        </IndexBox>
        <NavItem><TradeIcon />交易</NavItem>
        <NavItem><PostIcon />发帖</NavItem>
        <NavItem><GridIcon />功能</NavItem>
        <NavItem><MoreIcon />设自选</NavItem>
        <HomeBar />
      </BottomNav>
    </Screen>
  );
}
